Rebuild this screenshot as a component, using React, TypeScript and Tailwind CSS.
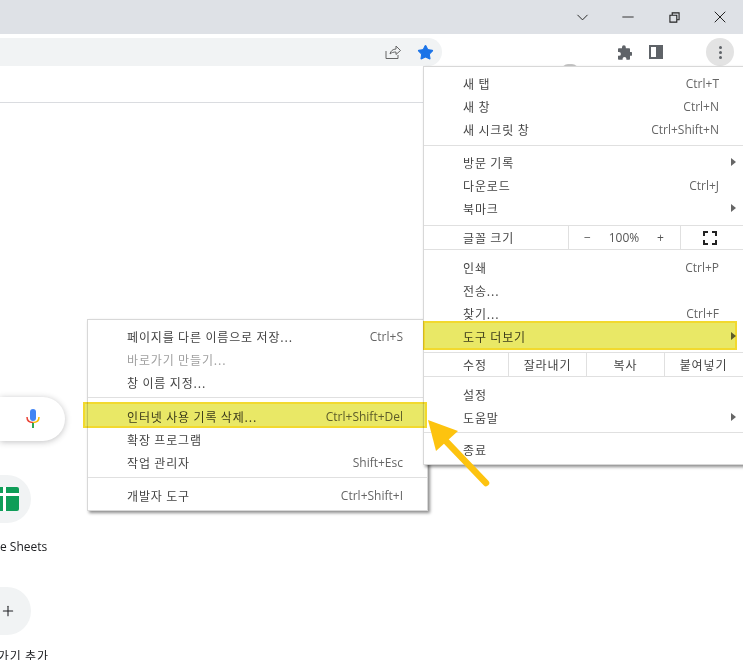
import React from "react";
import { X, ChevronDown, Minus, Star, Plus } from "lucide-react";

const kr = "[font-family:'Noto_Sans_CJK_KR','Noto_Sans',sans-serif]";

type MenuRowProps = {
  label: string;
  shortcut?: string;
  arrow?: boolean;
  disabled?: boolean;
};

const MenuRow = ({ label, shortcut, arrow, disabled }: MenuRowProps) => (
  <div className="relative flex h-[23px] items-center justify-between pl-[39px] pr-[24px]">
    <span
      className={`text-[12px] tracking-[0.85px] ${disabled ? "text-[#a0a0a0]" : "text-[#444]"}`}
    >
      {label}
    </span>
    {shortcut && (
      <span className="text-[12px] text-[#666] [font-family:'Open_Sans',sans-serif]">
        {shortcut}
      </span>
    )}
    {arrow && (
      <span className="absolute right-[7px] top-[7px] h-0 w-0 border-y-[4px] border-l-[5px] border-y-transparent border-l-[#666]" />
    )}
  </div>
);

const Sep = ({ className }: { className: string }) => (
  <div className={`h-px bg-[#e0e0e0] ${className}`} />
);

const EditCell = ({ label }: { label: string }) => (
  <div className="flex h-full w-[78px] items-center justify-center border-l border-[#e0e0e0] text-[12px] tracking-[0.85px] text-[#444]">
    {label}
  </div>
);

const MainMenu = () => (
  <div
    className={`absolute left-[423px] top-[66px] w-[321px] border border-[#d8d8d8] bg-white pt-[5px] pb-[3px] shadow-[2px_2px_3px_rgba(0,0,0,0.45)] ${kr}`}
  >
    <MenuRow label="새 탭" shortcut="Ctrl+T" />
    <MenuRow label="새 창" shortcut="Ctrl+N" />
    <MenuRow label="새 시크릿 창" shortcut="Ctrl+Shift+N" />
    <Sep className="mt-[4px] mb-[5px]" />
    <MenuRow label="방문 기록" arrow />
    <MenuRow label="다운로드" shortcut="Ctrl+J" />
    <MenuRow label="북마크" arrow />
    <Sep className="mt-[5px]" />
    <div className="flex h-[23px] items-center">
      <div className="w-[144px] pl-[39px] text-[12px] tracking-[0.85px] text-[#444]">글꼴 크기</div>
      <div className="flex h-full w-[112px] items-center justify-between border-l border-[#e0e0e0] pl-[15px] pr-[16px] text-[12px] text-[#555] [font-family:'Open_Sans',sans-serif]">
        <span>−</span>
        <span>100%</span>
        <span>+</span>
      </div>
      <div className="flex h-full flex-1 items-center justify-center border-l border-[#e0e0e0] pr-[4px]">
        <svg width="14" height="14" viewBox="0 0 14 14" fill="none" stroke="#222" strokeWidth="2">
          <path d="M1 5V1H5M9 1H13V5M13 9V13H9M5 13H1V9" />
        </svg>
      </div>
    </div>
    <Sep className="mb-[6px]" />
    <MenuRow label="인쇄" shortcut="Ctrl+P" />
    <MenuRow label="전송..." />
    <MenuRow label="찾기..." shortcut="Ctrl+F" />
    <MenuRow label="도구 더보기" arrow />
    <Sep className="mt-[4px]" />
    <div className="flex h-[23px] items-center">
      <div className="w-[84px] pl-[39px] text-[12px] tracking-[0.85px] text-[#444]">수정</div>
      <EditCell label="잘라내기" />
      <EditCell label="복사" />
      <EditCell label="붙여넣기" />
    </div>
    <Sep className="mb-[6px]" />
    <MenuRow label="설정" />
    <MenuRow label="도움말" arrow />
    <Sep className="mt-[3px] mb-[5px]" />
    <MenuRow label="종료" />
  </div>
);

const SubMenu = () => (
  <div
    className={`absolute left-[87px] top-[319px] w-[341px] border border-[#d8d8d8] bg-white pt-[5px] pb-[3px] shadow-[2px_2px_3px_rgba(0,0,0,0.45)] ${kr}`}
  >
    <MenuRow label="페이지를 다른 이름으로 저장..." shortcut="Ctrl+S" />
    <MenuRow label="바로가기 만들기..." disabled />
    <MenuRow label="창 이름 지정..." />
    <Sep className="mt-[3px] mb-[7px]" />
    <MenuRow label="인터넷 사용 기록 삭제..." shortcut="Ctrl+Shift+Del" />
    <MenuRow label="확장 프로그램" />
    <MenuRow label="작업 관리자" shortcut="Shift+Esc" />
    <Sep className="mt-[3px] mb-[6px]" />
    <MenuRow label="개발자 도구" shortcut="Ctrl+Shift+I" />
  </div>
);

const App = () => {
  return (
    <div className="relative h-[660px] w-[743px] overflow-hidden bg-white">
      {/* title bar */}
      <div className="flex h-[34px] items-center justify-end bg-[#dee1e6] text-[#222]">
        <ChevronDown size={19} strokeWidth={1.2} className="mr-[27px]" />
        <Minus size={18} strokeWidth={1.2} className="mr-[32px]" />
        <svg width="11" height="11" viewBox="0 0 12 12" fill="none" stroke="#222" strokeWidth="1.2" className="mr-[30px]">
          <path d="M1 3.5H8.5V11H1ZM3.5 3.5V1H11V8.5H8.5" />
        </svg>
        <X size={20} strokeWidth={1.2} className="mr-[13px]" />
      </div>

      {/* toolbar */}
      <div className="flex h-[33px] items-start bg-white pt-[4px]">
        <div className="flex h-[28px] w-[442px] items-center justify-end rounded-r-[14px] bg-[#f1f3f4] pr-[8px]">
          <svg width="16" height="16" viewBox="0 0 16 16" fill="none" stroke="#666" strokeWidth="1" className="mr-[16px]">
            <path d="M1 7V14.5H13V11M5 10C5.5 7 8 5 11 5V2L15.5 6.5L11 10.5V8C8.5 8 6.5 8.5 5 10Z" />
          </svg>
          <Star size={17} fill="#1a73e8" stroke="#1a73e8" strokeWidth={1.5} />
        </div>
        <svg width="15" height="15" viewBox="0 0 15 15" fill="#5f6368" className="ml-[175px] mt-[7px]">
          <path d="M5 2.2a1.9 1.9 0 0 1 3.8 0V3.2H12.2c.5 0 .8.3.8.8V7h1a1.9 1.9 0 0 1 0 3.8h-1V14c0 .5-.3.8-.8.8H9.4v-1a1.9 1.9 0 0 0-3.8 0v1H1.8c-.5 0-.8-.3-.8-.8V10.8h1a1.9 1.9 0 0 0 0-3.8H1V4c0-.5.3-.8.8-.8H5Z" />
        </svg>
        <div className="ml-[17px] mt-[7px] flex h-[14px] w-[14px] justify-end border-2 border-[#5f6368]">
          <div className="h-full w-[5px] bg-[#5f6368]" />
        </div>
        <div className="ml-[43px] flex h-[28px] w-[28px] flex-col items-center justify-center gap-[2px] rounded-full bg-[#e3e3e3]">
          <span className="h-[3px] w-[3px] rounded-full bg-[#5f6368]" />
          <span className="h-[3px] w-[3px] rounded-full bg-[#5f6368]" />
          <span className="h-[3px] w-[3px] rounded-full bg-[#5f6368]" />
        </div>
      </div>

      {/* bookmark bar */}
      <div className="h-[36px] border-b border-[#dadce0] bg-white" />

      {/* new tab page */}
      <div className="pt-[294px]">
        <div className="flex h-[44px] w-[65px] items-center justify-end rounded-r-[22px] bg-white pr-[24px] shadow-[0_1px_6px_rgba(32,33,36,0.28)]">
          <svg width="14" height="20" viewBox="0 0 14 20" className="mr-[1px]">
            <rect x="4" y="0" width="6" height="12" rx="3" fill="#4285f4" />
            <path d="M1 8C1 11.5 3.5 13.5 7 13.5" fill="none" stroke="#ea4335" strokeWidth="1.5" />
            <path d="M13 8C13 11.5 10.5 13.5 7 13.5" fill="none" stroke="#fbbc04" strokeWidth="1.5" />
            <rect x="6" y="14" width="2" height="5" fill="#34a853" />
          </svg>
        </div>
        <div className="mt-[34px] flex h-[48px] w-[31px] items-center justify-end rounded-r-[24px] bg-[#f1f3f4] pr-[12px]">
          <div className="relative h-[24px] w-[19px] rounded-r-[2px] bg-[#0f9d58]">
            <div className="absolute left-[3px] top-0 h-full w-[3px] bg-white" />
            <div className="absolute left-0 top-[6px] h-[3px] w-full bg-white" />
          </div>
        </div>
        <div className="mt-[16px] text-[12px] leading-[16px] text-[#202124] [font-family:'Open_Sans',sans-serif]">e Sheets</div>
        <div className="mt-[32px] flex h-[48px] w-[31px] items-center justify-end rounded-r-[24px] bg-[#f1f3f4] pr-[15px]">
          <Plus size={20} strokeWidth={1.6} className="text-[#202124]" />
        </div>
        <div className={`mt-[12px] -ml-[26px] whitespace-nowrap text-[12px] tracking-[0.85px] text-[#202124] ${kr}`}>바로가기 추가</div>
      </div>

      {/* menus */}
      <SubMenu />
      <div className="absolute left-[562px] top-[64px] h-[6px] w-[16px] rounded-t-full bg-[#c4c4c4]" />
      <MainMenu />

      {/* highlight boxes */}
      <div className="absolute left-[423px] top-[321px] h-[29px] w-[314px] border-2 border-[#f2d92e] bg-[#e9e866] mix-blend-multiply" />
      <div className="absolute left-[83px] top-[402px] h-[26px] w-[344px] border-2 border-[#f2d92e] bg-[#e9e866] mix-blend-multiply" />

      {/* arrow */}
      <svg width="80" height="80" viewBox="0 0 80 80" className="absolute left-[420px] top-[412px]">
        <path d="M66 71L22 25" stroke="#fdc30f" strokeWidth="6.5" strokeLinecap="round" />
        <path d="M8 8L38 19L16 39Z" fill="#fdc30f" />
      </svg>
    </div>
  );
};

export default App;
